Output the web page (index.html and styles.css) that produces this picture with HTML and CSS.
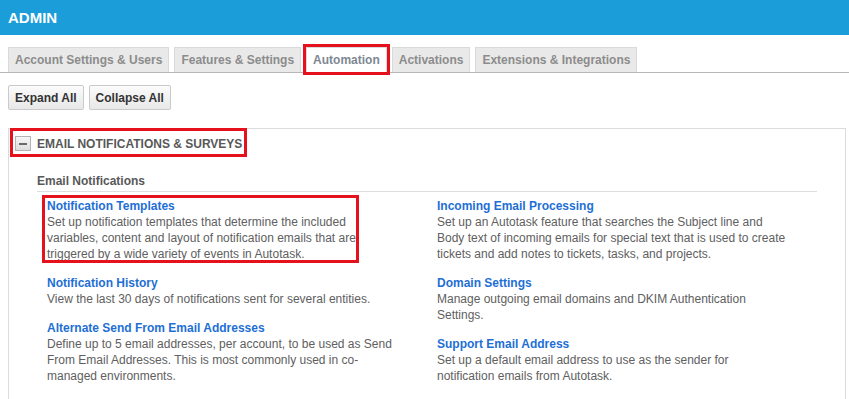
FILE: index.html
```html
<!DOCTYPE html>
<html lang="en">
<head>
    <meta charset="UTF-8">
    <meta name="viewport" content="width=device-width, initial-scale=1.0">
    <title>Admin - Automation</title>
    <link rel="stylesheet" href="styles.css">
</head>
<body>
    <div class="topbar">ADMIN</div>

    <div class="tabs">
        <span class="tab">Account Settings &amp; Users</span>
        <span class="tab">Features &amp; Settings</span>
        <span class="tab active">Automation</span>
        <span class="tab">Activations</span>
        <span class="tab">Extensions &amp; Integrations</span>
    </div>

    <div class="toolbar">
        <button class="btn">Expand All</button>
        <button class="btn">Collapse All</button>
    </div>

    <div class="panel">
        <div class="panel-head">
            <span class="toggle"></span>
            <span class="panel-title">EMAIL NOTIFICATIONS &amp; SURVEYS</span>
        </div>

        <div class="section">
            <div class="section-title">Email Notifications</div>
            <div class="cols">
                <div class="col">
                    <div class="item marked">
                        <a class="item-title" href="#">Notification Templates</a>
                        <div class="item-desc">Set up notification templates that determine the included variables, content and layout of notification emails that are triggered by a wide variety of events in Autotask.</div>
                    </div>
                    <div class="item">
                        <a class="item-title" href="#">Notification History</a>
                        <div class="item-desc">View the last 30 days of notifications sent for several entities.</div>
                    </div>
                    <div class="item">
                        <a class="item-title" href="#">Alternate Send From Email Addresses</a>
                        <div class="item-desc">Define up to 5 email addresses, per account, to be used as Send From Email Addresses. This is most commonly used in co-managed environments.</div>
                    </div>
                </div>
                <div class="col">
                    <div class="item">
                        <a class="item-title" href="#">Incoming Email Processing</a>
                        <div class="item-desc">Set up an Autotask feature that searches the Subject line and Body text of incoming emails for special text that is used to create tickets and add notes to tickets, tasks, and projects.</div>
                    </div>
                    <div class="item">
                        <a class="item-title" href="#">Domain Settings</a>
                        <div class="item-desc">Manage outgoing email domains and DKIM Authentication Settings.</div>
                    </div>
                    <div class="item">
                        <a class="item-title" href="#">Support Email Address</a>
                        <div class="item-desc">Set up a default email address to use as the sender for notification emails from Autotask.</div>
                    </div>
                </div>
            </div>
        </div>
    </div>
</body>
</html>
```

FILE: styles.css
```css
body {
    margin: 0;
    font-family: "Liberation Sans", Arial, sans-serif;
    font-size: 12px;
    color: #5e5e5e;
    background: #fff;
}
.topbar {
    height: 35px;
    line-height: 35px;
    padding-left: 8px;
    background-color: #1b9dd9;
    color: #fff;
    font-size: 15px;
    font-weight: bold;
}
.tabs {
    display: flex;
    gap: 5px;
    padding: 12px 0 0 8px;
    border-bottom: 1px solid #b8b8b8;
}
.tab {
    line-height: 24px;
    padding: 0 6px;
    border: 1px solid #dadada;
    border-bottom: none;
    background-color: #e9e9e9;
    color: #8c8c8c;
    font-weight: bold;
}
.tab.active {
    background-color: #fff;
    color: #7e8793;
    outline: 3px solid #e5121d;
}
.toolbar {
    display: flex;
    gap: 5px;
    padding: 12px 0 0 8px;
}
.btn {
    height: 25px;
    padding: 0 6px;
    border: 1px solid #cacaca;
    border-radius: 2px;
    background: linear-gradient(#fbfbfb, #e8e8e8);
    font-family: inherit;
    font-size: 12px;
    font-weight: bold;
    color: #333;
}
.panel {
    margin: 18px 3px 0 8px;
    border: 1px solid #dcdcdc;
    border-bottom: none;
    height: 300px;
}
.panel-head {
    display: flex;
    align-items: center;
    gap: 6px;
    width: fit-content;
    height: 21px;
    margin: 2px 0 0 4px;
    padding: 2px 2px 0;
    outline: 3px solid #e5121d;
}
.toggle {
    position: relative;
    width: 14px;
    height: 13px;
    border: 1px solid #b4b4b4;
    background: linear-gradient(#f6f6f6, #dedede);
}
.toggle::before {
    content: "";
    position: absolute;
    left: 3px;
    top: 6px;
    width: 8px;
    height: 2px;
    background-color: #6a6a6a;
}
.panel-title {
    font-weight: bold;
    color: #585858;
}
.section {
    margin: 19px 28px 0 28px;
}
.section-title {
    line-height: 16px;
    padding-bottom: 2px;
    border-bottom: 1px solid #dedede;
    font-weight: bold;
    color: #585858;
}
.cols {
    display: grid;
    grid-template-columns: 1fr 1fr;
    padding-top: 6px;
}
.item {
    position: relative;
    padding: 0 31px 0 10px;
    margin-bottom: 13px;
    line-height: 16px;
}
.item-title {
    display: block;
    font-weight: bold;
    color: #1e6fd5;
    text-decoration: none;
}
.item-desc {
    color: #606060;
}
/* annotation box drawn over the first entry */
.marked::after {
    content: "";
    position: absolute;
    left: 5px;
    top: -3px;
    width: 317px;
    height: 68px;
    border: 3px solid #e5121d;
    box-sizing: border-box;
}
```
